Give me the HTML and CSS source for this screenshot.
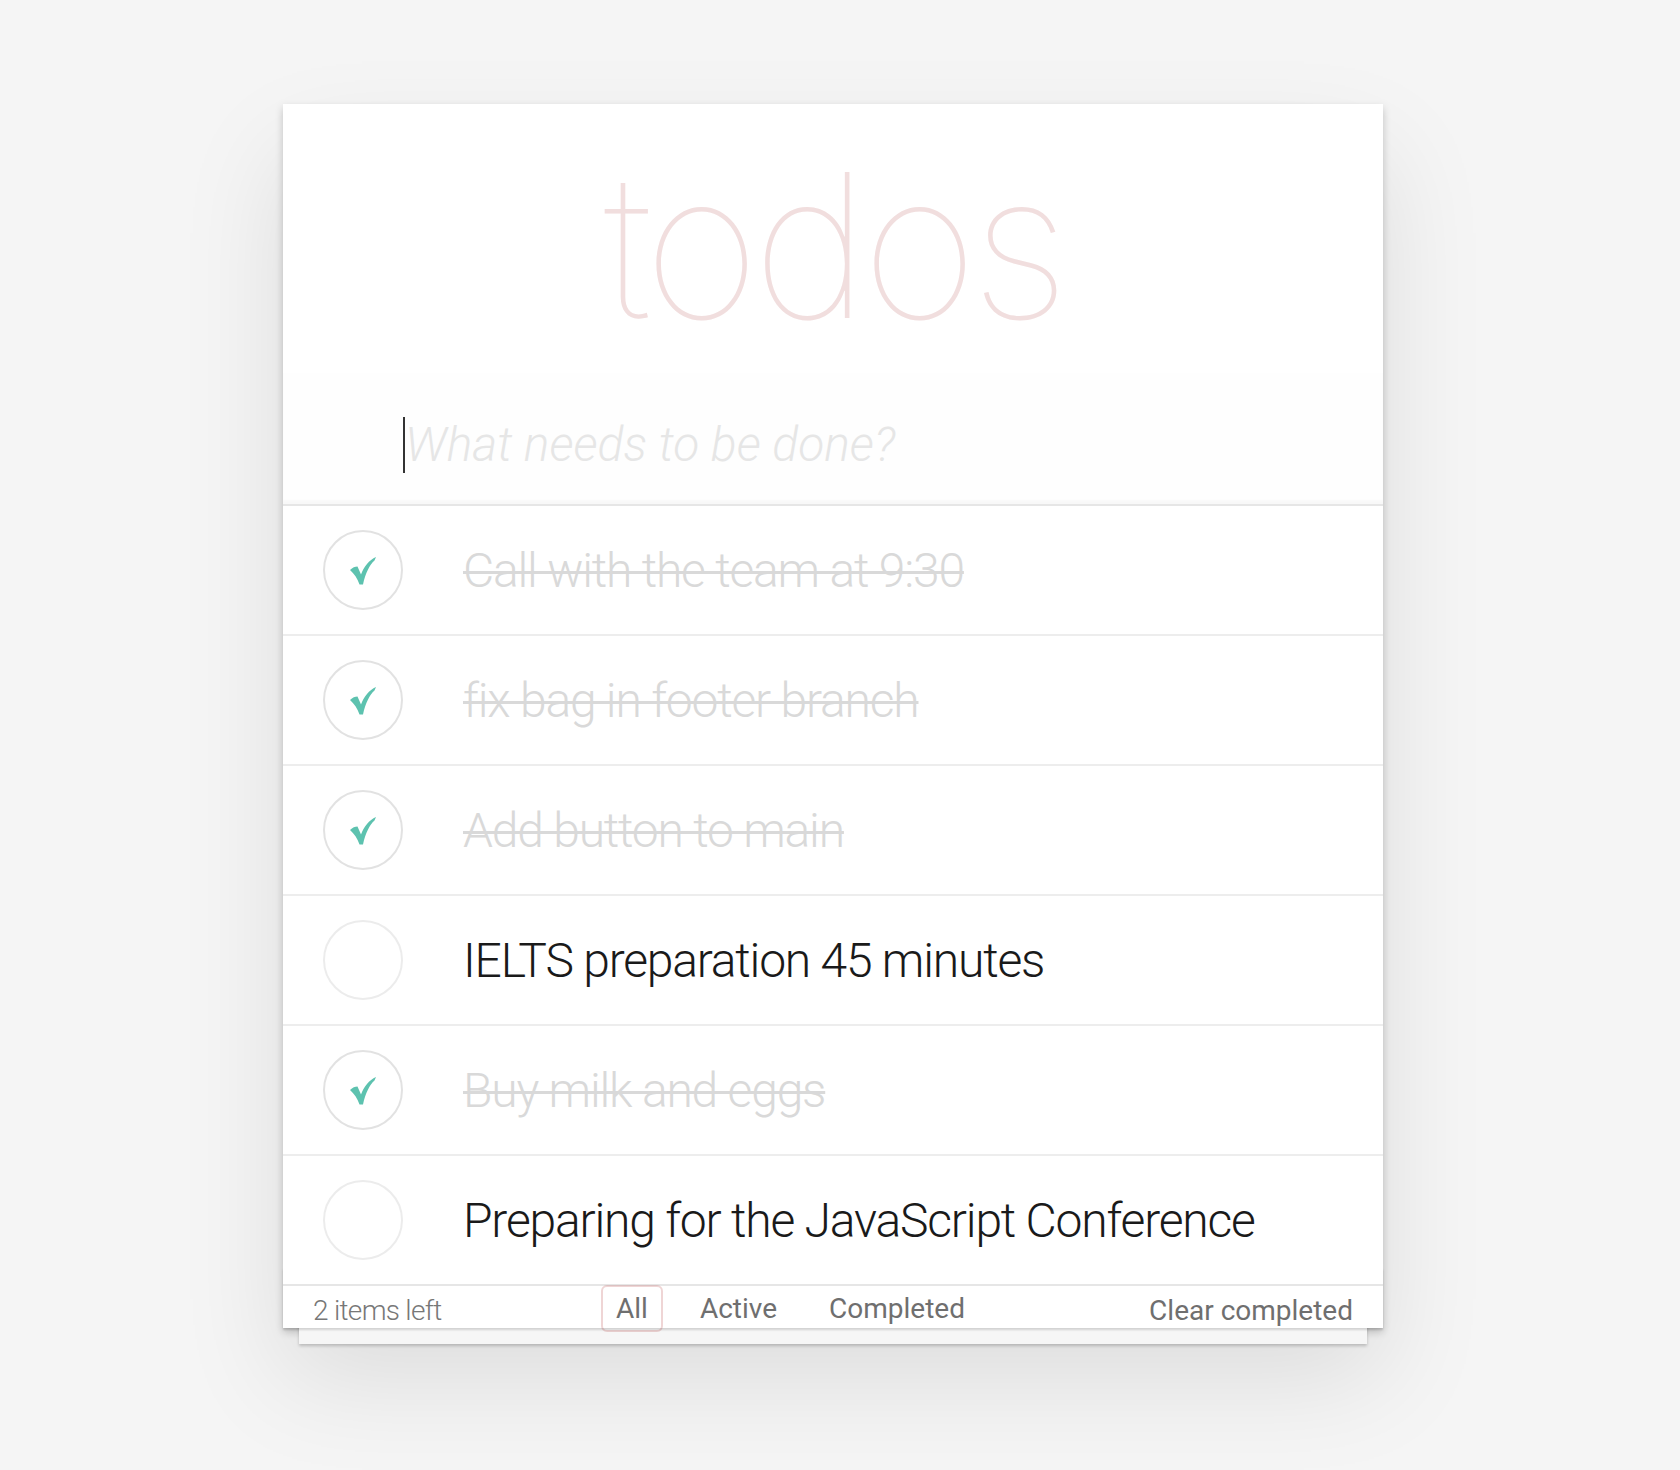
FILE: index.html
```html
<!DOCTYPE html>
<html lang="en">
<head>
<meta charset="utf-8">
<title>todos</title>
<link rel="stylesheet" href="styles.css">
</head>
<body>
<section class="todoapp">
  <header class="header">
    <h1 class="title">todos</h1>
    <div class="new-todo"><span class="caret"></span><span class="placeholder">What needs to be done?</span></div>
  </header>
  <ul class="todo-list">
    <li class="todo done">
      <span class="toggle"><svg class="check" viewBox="0 0 26 30" width="26" height="30"><path d="M0 15C2.5 12.5 5 11.5 7.5 11.5L11 19.5C14 11.5 19 5 26 2L24.5 5.5C19.5 10 15.5 18 13 29.5L9.5 29.5C7.5 23.5 4 18.5 0 15Z"/></svg></span>
      <span class="label">Call with the team at 9:30</span>
    </li>
    <li class="todo done">
      <span class="toggle"><svg class="check" viewBox="0 0 26 30" width="26" height="30"><path d="M0 15C2.5 12.5 5 11.5 7.5 11.5L11 19.5C14 11.5 19 5 26 2L24.5 5.5C19.5 10 15.5 18 13 29.5L9.5 29.5C7.5 23.5 4 18.5 0 15Z"/></svg></span>
      <span class="label">fix bag in footer branch</span>
    </li>
    <li class="todo done">
      <span class="toggle"><svg class="check" viewBox="0 0 26 30" width="26" height="30"><path d="M0 15C2.5 12.5 5 11.5 7.5 11.5L11 19.5C14 11.5 19 5 26 2L24.5 5.5C19.5 10 15.5 18 13 29.5L9.5 29.5C7.5 23.5 4 18.5 0 15Z"/></svg></span>
      <span class="label">Add button to main</span>
    </li>
    <li class="todo">
      <span class="toggle"></span>
      <span class="label">IELTS preparation 45 minutes</span>
    </li>
    <li class="todo done">
      <span class="toggle"><svg class="check" viewBox="0 0 26 30" width="26" height="30"><path d="M0 15C2.5 12.5 5 11.5 7.5 11.5L11 19.5C14 11.5 19 5 26 2L24.5 5.5C19.5 10 15.5 18 13 29.5L9.5 29.5C7.5 23.5 4 18.5 0 15Z"/></svg></span>
      <span class="label">Buy milk and eggs</span>
    </li>
    <li class="todo">
      <span class="toggle"></span>
      <span class="label">Preparing for the JavaScript Conference</span>
    </li>
  </ul>
  <footer class="footer">
    <span class="count">2 items left</span>
    <ul class="filters">
      <li><a class="filter selected">All</a></li>
      <li><a class="filter">Active</a></li>
      <li><a class="filter">Completed</a></li>
    </ul>
    <a class="clear">Clear completed</a>
  </footer>
</section>
</body>
</html>
```
FILE: styles.css
```css
html, body {
  margin: 0;
  padding: 0;
}
body {
  background: #f5f5f5;
  font-family: "Roboto", "Liberation Sans", sans-serif;
  font-weight: 300;
  color: #1a1a1a;
  width: 1680px;
  height: 1470px;
  overflow: hidden;
}
.todoapp {
  width: 1100px;
  margin: 104px 0 0 283px;
  background: #fff;
  position: relative;
  box-shadow: 0 4px 8px rgba(0,0,0,0.2), 0 50px 100px 0 rgba(0,0,0,0.1);
}
.header {
  display: flex;
  flex-direction: column;
}
.title {
  margin: 0;
  height: 269px;
  box-sizing: border-box;
  padding-top: 41px;
  font-family: "Inter", "Roboto", sans-serif;
  font-size: 200px;
  line-height: 200px;
  font-weight: 100;
  text-align: center;
  color: #f1dede;
  letter-spacing: -7px;
}
.new-todo {
  height: 131px;
  box-sizing: border-box;
  padding: 12px 32px 0 120px;
  display: flex;
  align-items: center;
  background: #fefefe;
  box-shadow: inset 0 -4px 2px rgba(0,0,0,0.025);
  font-size: 48px;
  font-style: italic;
  font-weight: 300;
  color: #e6e6e6;
}
.caret {
  width: 2px;
  height: 56px;
  background: #333;
  flex: none;
}
.todo-list {
  list-style: none;
  margin: 0;
  padding: 0;
  border-top: 2px solid #e6e6e6;
}
.todo {
  height: 128px;
  display: flex;
  align-items: center;
  padding-left: 40px;
  border-bottom: 2px solid #ededed;
  font-size: 48px;
}
.todo:last-child {
  border-bottom: none;
}
.toggle {
  width: 80px;
  height: 80px;
  box-sizing: border-box;
  border: 2px solid #ececec;
  border-radius: 50%;
  display: flex;
  align-items: center;
  justify-content: center;
  flex: none;
}
.done .toggle {
  border-color: #e2e2e2;
}
.check {
  fill: #5dc2af;
  display: block;
}
.label {
  margin-left: 60px;
  white-space: nowrap;
  letter-spacing: -1.2px;
}
.done .label {
  color: #d9d9d9;
  text-decoration: line-through;
  text-decoration-thickness: 3px;
}
.footer {
  position: relative;
  height: 36px;
  border-top: 2px solid #e6e6e6;
  padding: 6px 30px 0;
  box-sizing: content-box;
  display: flex;
  align-items: center;
  font-size: 28px;
  color: #777;
}
.footer::before {
  content: "";
  position: absolute;
  left: 0;
  right: 0;
  bottom: 0;
  height: 60px;
  box-shadow: 0 2px 2px rgba(0,0,0,0.15), 0 32px 0 -16px #f6f6f6, 0 34px 3px -16px rgba(0,0,0,0.2);
  pointer-events: none;
}
.count {
  font-weight: 300;
  width: 288px;
  flex: none;
  letter-spacing: -0.7px;
}
.filters {
  list-style: none;
  margin: 0;
  padding: 0;
  display: flex;
  gap: 22px;
  position: relative;
  top: -2px;
}
.filter {
  display: block;
  padding: 5px 13px;
  border: 2px solid transparent;
  border-radius: 6px;
  font-weight: 400;
  color: #6f6f6f;
}
.filter.selected {
  border-color: rgba(175,47,47,0.2);
}
.clear {
  margin-left: auto;
  font-weight: 400;
  color: #6f6f6f;
}
```
